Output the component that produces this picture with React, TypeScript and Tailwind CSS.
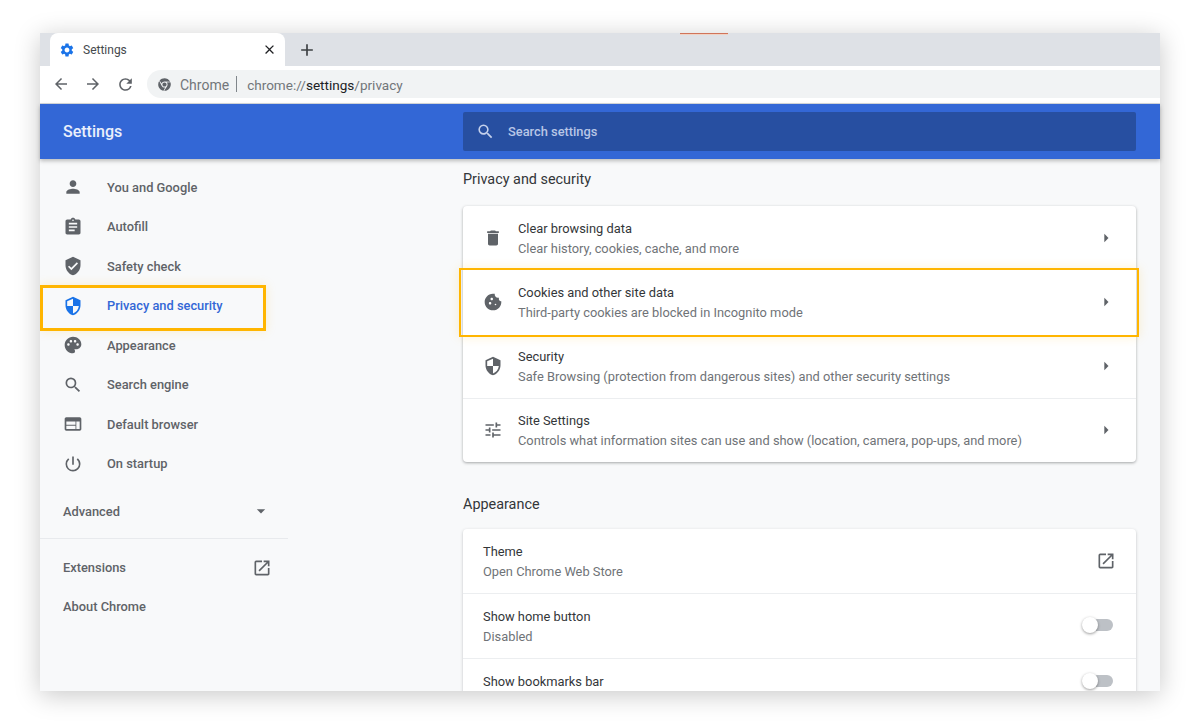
import React from "react";
import {
  MdPerson, MdAssignment, MdVerifiedUser, MdSecurity, MdPalette, MdSearch, MdWeb, MdPowerSettingsNew,
  MdDelete, MdCookie, MdTune, MdOpenInNew, MdArrowRight, MdArrowDropDown, MdSettings, MdClose, MdAdd,
  MdArrowBack, MdArrowForward, MdRefresh,
} from "react-icons/md";
import { FaChrome } from "react-icons/fa";

const nav = [
  { icon: MdPerson, label: "You and Google" },
  { icon: MdAssignment, label: "Autofill" },
  { icon: MdVerifiedUser, label: "Safety check" },
  { icon: MdSecurity, label: "Privacy and security", active: true },
  { icon: MdPalette, label: "Appearance" },
  { icon: MdSearch, label: "Search engine" },
  { icon: MdWeb, label: "Default browser" },
  { icon: MdPowerSettingsNew, label: "On startup" },
];

const privacy = [
  { icon: MdDelete, t: "Clear browsing data", s: "Clear history, cookies, cache, and more" },
  { icon: MdCookie, t: "Cookies and other site data", s: "Third-party cookies are blocked in Incognito mode", hl: true },
  { icon: MdSecurity, t: "Security", s: "Safe Browsing (protection from dangerous sites) and other security settings" },
  { icon: MdTune, t: "Site Settings", s: "Controls what information sites can use and show (location, camera, pop-ups, and more)" },
];

function Toggle() {
  return (
    <div className="relative h-[12px] w-[28px] rounded-full bg-[#bdc1c6]">
      <div className="absolute left-[-3px] top-[-2px] h-4 w-4 rounded-full bg-white shadow-[0_1px_3px_rgba(0,0,0,0.4)]" />
    </div>
  );
}

export default function App() {
  return (
    <div className="h-[727px] w-[1200px] overflow-hidden bg-white px-[40px] pt-[33px] font-['Roboto',sans-serif] text-[12.85px]">
      <div className="relative flex h-[658px] flex-col bg-[#f8f9fa] shadow-[0_4px_24px_rgba(0,0,0,0.22)]">
        <div className="absolute left-[640px] top-0 z-20 h-[2px] w-[48px] border-b border-[#f0d2c4] bg-[#d0745a]" />
        <div className="flex h-[33px] shrink-0 items-end bg-[#dee1e6] pl-[10px]">
          <div className="flex h-[33px] w-[235px] items-center rounded-t-lg bg-white pl-[9px] pr-[8px]">
            <MdSettings className="text-[#1a73e8]" size={16} />
            <span className="ml-[8px] flex-1 text-[12px] text-[#45494d]">Settings</span>
            <MdClose className="text-[#202124]" size={15} />
          </div>
          <div className="ml-[12px] flex h-[33px] items-center">
            <MdAdd className="text-[#3c4043]" size={20} />
          </div>
        </div>
        <div className="flex h-[38px] shrink-0 items-center border-b border-[#d5d8dc] bg-white pb-px pl-[12px]">
          <MdArrowBack className="text-[#5f6368]" size={18} />
          <MdArrowForward className="ml-[14px] text-[#5f6368]" size={18} />
          <MdRefresh className="ml-[14px] text-[#5f6368]" size={19} />
          <div className="ml-[12px] flex h-[28px] flex-1 items-center rounded-l-full bg-[#f1f3f4] pl-[11px] text-[#72767a]">
            <FaChrome className="text-[#5f6368]" size={13} />
            <span className="ml-[9px] pt-[2px] text-[14px]">Chrome</span>
            <span className="ml-[7px] h-[16px] w-px bg-[#80868b]" />
            <span className="ml-[10px] pt-[2px] text-[13.55px]">
              chrome://<span className="text-[#202124]">settings</span>/privacy
            </span>
          </div>
        </div>
        <div className="z-10 flex h-[55px] shrink-0 items-center bg-[#3367d6] pr-[24px] shadow-[0_2px_4px_rgba(0,0,0,0.25)]">
          <div className="w-[423px] pl-[23px] text-[16px] font-medium text-white/90">Settings</div>
          <div className="flex h-[39px] flex-1 items-center rounded-[2px] bg-[#274fa1] pl-[13px] font-medium text-[#b8c6e6]">
            <MdSearch size={19} className="text-[#c5d1ec]" />
            <span className="ml-[13px]">Search settings</span>
          </div>
        </div>
        <div className="flex min-h-0 flex-1 overflow-hidden">
          <aside className="relative w-[248px] shrink-0 pt-[8.5px] font-medium text-[#5f6368]">
            {nav.map((n) => (
              <div key={n.label} className={`relative flex h-[39.5px] items-center pl-[23px] ${n.active ? "text-[#3367d6]" : ""}`}>
                <n.icon size={20} className={n.active ? "text-[#1a73e8]" : "text-[#5f6368]"} />
                <span className="ml-[24px]">{n.label}</span>
                {n.active && (
                  <div className="absolute left-0 top-[-1px] h-[46px] w-[226px] border-[3px] border-[#ffb500] shadow-[0_0_10px_rgba(255,181,0,0.18)]" />
                )}
              </div>
            ))}
            <div className="mt-[8px] flex h-[39.5px] items-center justify-between pl-[23px] pr-[17px]">
              <span>Advanced</span>
              <MdArrowDropDown size={20} />
            </div>
            <div className="mt-[7px] border-t border-[#e8eaed]" />
            <div className="mt-[8px] flex h-[40px] items-center justify-between pl-[23px] pr-[16px] pt-[1px]">
              <span>Extensions</span>
              <MdOpenInNew size={20} />
            </div>
            <div className="flex h-[39.5px] items-center pl-[23px]">About Chrome</div>
          </aside>
          <main className="min-w-0 flex-1 pl-[175px] pr-[24px]">
            <h2 className="mt-[11px] text-[14.4px] leading-[20px] text-[#333639]">Privacy and security</h2>
            <div className="mt-[16px] rounded bg-white shadow-[0_1px_3px_rgba(60,64,67,0.45)]">
              {privacy.map((r, i) => (
                <div key={r.t} className={`relative flex h-[64px] items-center pl-[20px] pr-[20px] ${i === 3 ? "shadow-[inset_0_1px_0_#eceef0]" : ""}`}>
                  <r.icon size={20} className="text-[#5f6368]" />
                  <div className="ml-[15px] flex-1 pt-[2px] leading-[20px]">
                    <div className="text-[#333639]">{r.t}</div>
                    <div className="text-[#6f7377]">{r.s}</div>
                  </div>
                  <MdArrowRight size={20} className="text-[#5f6368]" />
                  {r.hl && (
                    <div className="absolute left-[-4px] right-[-3px] top-[-2px] h-[69px] border-2 border-[#ffb500] shadow-[0_0_10px_rgba(255,181,0,0.18)]" />
                  )}
                </div>
              ))}
            </div>
            <h2 className="mt-[33px] text-[14.4px] leading-[20px] text-[#333639]">Appearance</h2>
            <div className="mt-[14px] h-[300px] rounded bg-white shadow-[0_1px_3px_rgba(60,64,67,0.3)]">
              <div className="flex h-[64px] items-center pl-[20px] pr-[20px]">
                <div className="flex-1 pt-[2px] leading-[20px]">
                  <div className="text-[#333639]">Theme</div>
                  <div className="text-[#6f7377]">Open Chrome Web Store</div>
                </div>
                <MdOpenInNew size={20} className="text-[#5f6368]" />
              </div>
              <div className="flex h-[65px] items-center border-t border-[#eceef0] pl-[20px] pr-[23px]">
                <div className="flex-1 pt-[1px] leading-[20px]">
                  <div className="text-[#333639]">Show home button</div>
                  <div className="text-[#6f7377]">Disabled</div>
                </div>
                <div className="mb-[2px]"><Toggle /></div>
              </div>
              <div className="flex h-[65px] items-start border-t border-[#eceef0] pl-[20px] pr-[23px] pt-[13px]">
                <div className="flex-1 leading-[20px] text-[#333639]">Show bookmarks bar</div>
                <div className="pt-[3px]"><Toggle /></div>
              </div>
            </div>
          </main>
        </div>
      </div>
    </div>
  );
}
